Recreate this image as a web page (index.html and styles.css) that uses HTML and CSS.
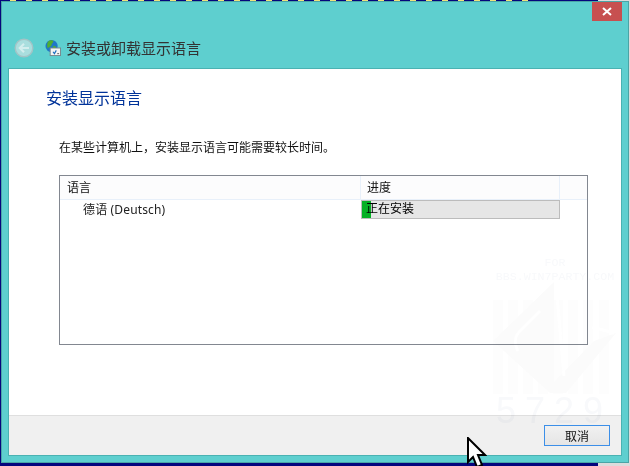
FILE: index.html
```html
<!DOCTYPE html>
<html lang="zh-CN">
<head>
<meta charset="utf-8">
<title>安装显示语言</title>
<link rel="stylesheet" href="styles.css">
</head>
<body>
<div class="topstrip"></div>
<div class="window">
  <button class="close" aria-label="关闭"><svg width="10" height="9" viewBox="0 0 10 9"><path d="M1 1l8 7M9 1L1 8" stroke="#fff" stroke-width="2" fill="none"/></svg></button>
  <div class="titlebar">
    <svg class="back" width="20" height="20" viewBox="0 0 20 20"><circle cx="10" cy="10" r="8.800" fill="#a9dede" stroke="#a3c4c6" stroke-width="1.400"/><path d="M15 10H6M10 5.800L5.800 10l4.200 4.200" stroke="#d3eeee" stroke-width="2.200" fill="none"/></svg>
    <svg class="globe" width="16" height="16" viewBox="0 0 17 17"><circle cx="7" cy="6.500" r="6.500" fill="#1f78c8"/><path d="M3 2c2-2 5-2 6-1 0 2-2 2-2 4s-3 2-4 4c-1-2-1-5 0-7zM9 6c2 0 3 1 3 3l-3 3c-1-2-1-4 0-6z" fill="#4fae34"/><rect x="5.500" y="8.500" width="11" height="8" fill="#f4f4f4" stroke="#77868c"/><path d="M8.500 12.500l1.500 2 2-3.500" stroke="#1a6fc0" stroke-width="1.200" fill="none"/><path d="M13 14.500h2" stroke="#555"/></svg>
    <span class="title">安装或卸载显示语言</span>
  </div>
  <div class="panel">
    <main class="content">
      <h1 class="heading">安装显示语言</h1>
      <p class="note">在某些计算机上，安装显示语言可能需要较长时间。</p>
      <div class="list">
        <div class="listhead">
          <div class="col-lang">语言</div>
          <div class="col-prog">进度</div>
          <div class="col-rest"></div>
        </div>
        <div class="row">
          <div class="cell-lang">德语 (Deutsch)</div>
          <div class="progress">
            <div class="fill" style="width:9px"></div>
            <span class="ptext">正在安装</span>
          </div>
        </div>
      </div>
    </main>
    <footer class="footer">
      <button class="cancel">取消</button>
    </footer>
  </div>
  <div class="watermark">
    <div class="wm-text">FOR<br>BBS.WIN7PARTY.COM</div>
    <svg class="wm-art" width="126" height="118" viewBox="0 0 126 118"><g fill="#fdfdfd"><rect x="1" y="19" width="10" height="94"/><rect x="16" y="19" width="10" height="94"/><rect x="31" y="19" width="10" height="94"/><rect x="46" y="19" width="10" height="94"/><rect x="61" y="19" width="10" height="94"/><rect x="76" y="19" width="10" height="94"/><rect x="91" y="19" width="10" height="94"/><rect x="107" y="19" width="10" height="94"/></g><path d="M1 60L62 1v100L102 60l22-8-50 60H58z" fill="#fbfbfb"/><path d="M64 3l8 92M26 70c-4-8-4-14 2-20l20-20M100 46l22 6" stroke="#fff" stroke-width="3" fill="none"/></svg>
    <div class="wm-num">5729</div>
  </div>
  <svg class="cursor" width="20" height="32" viewBox="0 0 20 32"><path d="M1 1v24l5-5 4 10 5-2-4-10h7z" fill="#fff" stroke="#000" stroke-width="2"/></svg>
</div>
</body>
</html>
```
FILE: styles.css
```css
* { box-sizing: border-box; }
html, body { margin: 0; height: 466px; overflow: hidden; }
body {
  position: relative;
  background: linear-gradient(90deg, #05057d 0 598px, #dcdcdc 598px);
  font-family: "Liberation Sans", "Noto Sans CJK SC", sans-serif;
  font-size: 12px;
  color: #111;
}
.topstrip {
  height: 1px;
  width: 530px;
  background: repeating-linear-gradient(90deg, #05057d 0 10px, #efe27a 10px 16px);
}
.window {
  position: absolute;
  left: 1px;
  top: 1px;
  width: 628px;
  height: 462px;
  padding: 0 6px 6px 6px;
  display: flex;
  flex-direction: column;
  background: #5ecfcf;
  border: 1px solid #4aa5a6;
}
.close {
  position: absolute;
  right: 6px;
  top: 0;
  width: 30px;
  height: 19px;
  padding: 0;
  border: 0;
  display: flex;
  align-items: center;
  justify-content: center;
  background: #c75050;
}
.titlebar {
  height: 66px;
  flex: none;
  display: flex;
  align-items: center;
  padding: 25px 0 0 6px;
}
.back { margin-right: 11px; }
.globe { margin-right: 5px; }
.title {
  font-size: 15px;
  color: #333;
}
.panel {
  flex: 1;
  display: flex;
  flex-direction: column;
  background: #fff;
  border: 1px solid #4ab2b2;
  overflow: hidden;
}
.content {
  flex: 1;
  padding: 0 0 0 37px;
}
.heading {
  margin: 20px 0 0;
  font-size: 16px;
  line-height: 20px;
  font-weight: 400;
  color: #003399;
}
.note {
  margin: 30px 0 0 13px;
  line-height: 18px;
  font-size: 12px;
  color: #111;
}
.list {
  margin: 18px 0 0 13px;
  width: 529px;
  height: 170px;
  border: 1px solid #828790;
}
.listhead {
  display: flex;
  height: 24px;
  background: #fcfcfd;
  border-bottom: 1px solid #e8f0fa;
}
.col-lang {
  width: 300px;
  padding: 5px 0 0 7px;
  line-height: 15px;
}
.col-prog {
  width: 200px;
  padding: 5px 0 0 6px;
  line-height: 15px;
  border-left: 1px solid #e8f0fa;
  border-right: 1px solid #e8f0fa;
}
.col-rest { flex: 1; }
.row {
  display: flex;
  height: 20px;
}
.cell-lang {
  width: 301px;
  padding: 2px 0 0 23px;
  line-height: 15px;
  color: #222;
  letter-spacing: 0.15px;
  font-family: "Noto Sans", "Noto Sans CJK SC", sans-serif;
}
.progress {
  position: relative;
  width: 199px;
  height: 19px;
  background: #e6e6e6;
  border: 1px solid #bcbcbc;
  overflow: hidden;
}
.fill {
  height: 100%;
  background: #06b025;
}
.ptext {
  position: absolute;
  left: 4px;
  top: 1px;
  line-height: 15px;
  color: #000;
}
.footer {
  flex: none;
  height: 40px;
  background: #f0f0f0;
  border-top: 1px solid #dfdfdf;
  display: flex;
  align-items: flex-start;
  justify-content: flex-end;
  padding: 9px 11px 0 0;
}
.cancel {
  width: 66px;
  height: 21px;
  padding: 0;
  border: 1px solid #3c8fe8;
  background: linear-gradient(#f1f1f1, #e5e5e5);
  font: inherit;
  color: #111;
}
.watermark {
  position: absolute;
  left: 490px;
  top: 257px;
  width: 126px;
  height: 166px;
  text-align: center;
  color: #f8f9fb;
  pointer-events: none;
  mix-blend-mode: multiply;
}
.wm-text {
  margin-top: -3px;
  font-family: "Liberation Mono", monospace;
  font-size: 11.600px;
  line-height: 14px;
  white-space: nowrap;
}
.wm-art {
  position: absolute;
  left: 0;
  top: 22px;
}
.wm-num {
  position: absolute;
  left: 4px;
  right: 0;
  top: 138px;
  font-size: 36px;
  letter-spacing: 9px;
  line-height: 28px;
  white-space: nowrap;
  text-align: left;
}
.cursor {
  position: absolute;
  left: 465px;
  top: 435px;
}
```
